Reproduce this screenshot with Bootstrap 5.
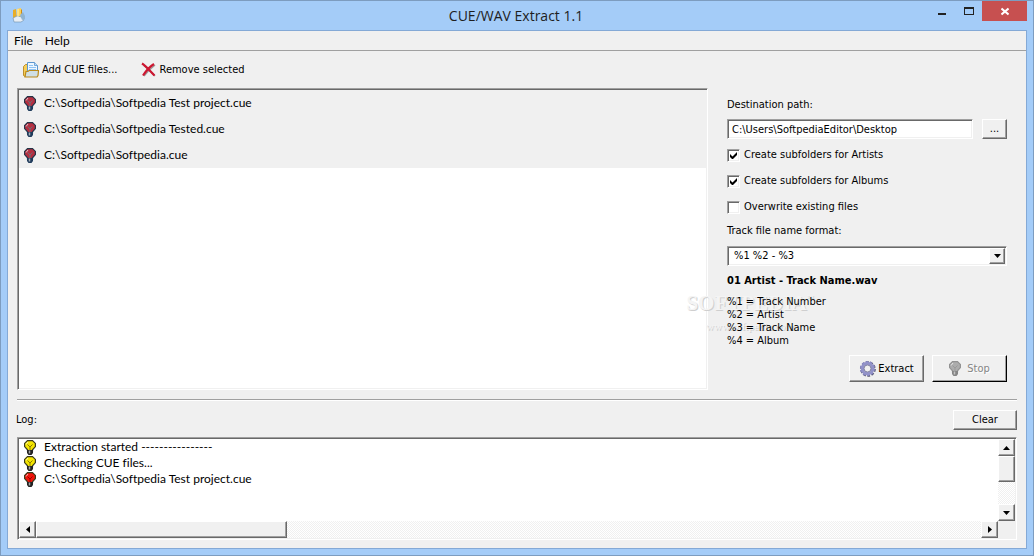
<!DOCTYPE html>
<html lang="en">
<head>
<meta charset="utf-8">
<meta name="viewport" content="width=device-width, initial-scale=1">
<title>CUE/WAV Extract 1.1</title>
<link href="https://cdn.jsdelivr.net/npm/bootstrap@5.3.0/dist/css/bootstrap.min.css" rel="stylesheet">
<style>
:root { --face: #f0f0f0; --mid: #a0a0a0; --dark: #696969; }
body { font: 11px/14px "DejaVu Sans Condensed", "DejaVu Sans", sans-serif; color: #000; }
.window { background: #a4ccf8; border: 1px solid #7d9cbf; padding: 0 6px 6px; }
.titlebar { height: 29px; padding: 0 6px 0 4px; font: 14px/29px "Open Sans", sans-serif; color: #1e1e1e; }
.title-side { flex: 1 1 0; height: 29px; }
.win-buttons { margin-right: -6px; }
.win-btn { border: 0; background: none; padding: 0; width: 27px; height: 20px; display: flex; justify-content: center; }
.win-close { width: 45px; background: #c75050; }
.client { background: var(--face); border: 1px solid #84a9d6; min-height: 0; }
.menubar { height: 20px; border-bottom: 1px solid var(--mid); padding-left: 6px; gap: 12px; font: 12px/19px Lato, sans-serif; }
.menubar a, .toolbar button { color: #000; text-decoration: none; }
.toolbar { height: 37px; padding-left: 15px; gap: 23px; }
.toolbar button { border: 0; background: none; padding: 0; gap: 3px; }
.workarea { padding: 0 19px 0 9px; gap: 19px; min-height: 0; }
.sunken { background: #fff; border: 1px solid; border-color: var(--mid) #fff #fff var(--mid); box-shadow: inset 1px 1px 0 var(--dark), inset -1px -1px 0 var(--face); padding: 1px; }
.raised { color: #000; background: var(--face); border: 1px solid; border-color: #fff var(--dark) var(--dark) #fff; border-radius: 0; box-shadow: inset -1px -1px 0 var(--mid); padding: 0; font-size: 11px; line-height: 14px; }
.entry { font: 12px/16px Lato, sans-serif; font-variant-ligatures: none; padding-left: 5px; gap: 8px; }
.file-list .entry { height: 26px; background: var(--face); }
.options { width: 280px; padding-top: 10px; }
.path-field { height: 20px; border-radius: 0; padding: 2px 4px; font-size: 11px; line-height: 14px; color: #000; min-width: 0; }
.browse { width: 25px; height: 20px; }
.path-row { margin: 7px 0 3px; gap: 9px; }
.check-row { height: 26px; gap: 4px; }
.check-row input { appearance: none; width: 13px; height: 13px; margin: 0; }
.check-row input:checked { background: #fff url("data:image/svg+xml,%3Csvg xmlns='http://www.w3.org/2000/svg' viewBox='0 0 13 13'%3E%3Cpath d='M3 5v3l2 2h1l4-4V3L5.5 7.500z'/%3E%3C/svg%3E") center / 13px 13px; }
.format-box { width: 100%; height: 20px; appearance: none; border-radius: 0; padding: 2px 20px 2px 6px; font-size: 11px; line-height: 14px; color: #000; }
.drop-arrow { right: 2px; top: 2px; width: 16px; height: 16px; pointer-events: none; }
.sample { margin: 8px 0 7px; }
.legend-lines { line-height: 13px; }
.action { width: 75px; height: 27px; gap: 2px; }
.action:disabled { color: #858585; border-right-color: #000; border-bottom-color: #000; text-shadow: 1px 1px 0 #fff; }
.watermark { left: 676px; top: 203px; width: 132px; text-align: center; font: bold 21px/24px "Liberation Serif", serif; color: #f4f4f4; text-shadow: 1px 1px 0 #cfcfcf; pointer-events: none; }
.watermark sup { font-size: 7px; top: -10px; }
.watermark span { display: block; font-size: 11px; line-height: 22px; font-weight: normal; }
.divider { height: 2px; margin: 9px 9px; border-top: 1px solid var(--mid); background: #fff; }
.log-head { padding: 0 9px 0 8px; margin-bottom: 7px; }
.clear { width: 64px; height: 20px; }
.log-box { margin: 0 9px 8px; height: 103px; display: grid; grid-template-columns: 1fr 17px; grid-template-rows: 1fr 17px; }
.track { background: repeating-conic-gradient(#fff 0 25%, #f0f0f0 0 50%) 0 0 / 2px 2px; }
.log-corner { background: var(--face); }
.arrow { width: 17px; height: 17px; }
.thumb-v { height: 26px; }
.thumb-h { width: 251px; }
</style>
</head>
<body>
<svg class="d-none">
  <symbol id="bulb" viewBox="0 0 12 15">
    <path d="M3.500 0.600h5l2.900 2.800v3.200L8.500 9.800v1h-5v-1L0.600 6.600V3.400z" fill="currentColor" stroke="var(--line,#3a3a1c)" stroke-width="1.200"/>
    <path d="M3.500 4.500L6 7l2.500-2.500M6 7v3" fill="none" stroke="var(--wire,#8a7a00)" stroke-width="1"/>
    <path d="M2 4.500L4 2" stroke="#fff" stroke-opacity=".7"/>
    <path d="M3 10h6v3l-1.500 2h-3L3 13z" fill="var(--cap,#222)"/>
    <path d="M5.500 10.500v3" stroke="#ddd" stroke-opacity=".7" stroke-width="1.500"/>
  </symbol>
</svg>
<div class="window vh-100 d-flex flex-column">
  <header class="titlebar d-flex">
    <div class="title-side">
      <svg class="d-block" width="16" height="29" viewBox="0 0 16 29"><path d="M2 9l3-1 1 11-4-1z" fill="#e9ad26"/><path d="M6 8l4-1v10H6z" fill="#ffd052"/><path d="M10 8l1 1v6h-1z" fill="#c98a18"/><path d="M2 17l4-2 5 1 2 3-3 2H3z" fill="#e8eef5" stroke="#7898b5" stroke-width=".7"/><path d="M9 14l3-3 2 4v3l-3 1z" fill="#8fb4d3"/><path d="M7 8v8" stroke="#fff3b0"/></svg>
    </div>
    <div>CUE/WAV Extract 1.1</div>
    <div class="title-side"><div class="win-buttons d-flex justify-content-end">
      <button class="win-btn" aria-label="Minimize"><svg width="10" height="20"><path d="M1 12h8v2H1z" fill="#222"/></svg></button>
      <button class="win-btn" aria-label="Maximize"><svg width="10" height="20"><path d="M0 6h10v8H0zM1 8v5h8V8z" fill="#222" fill-rule="evenodd"/></svg></button>
      <button class="win-btn win-close" aria-label="Close"><svg width="8" height="20"><path d="M0.500 7.500l7 6m0-6l-7 6" stroke="#fff" stroke-width="2"/></svg></button>
    </div></div>
  </header>
  <main class="client flex-grow-1 d-flex flex-column">
    <nav class="menubar d-flex"><a href="#">File</a><a href="#">Help</a></nav>
    <div class="toolbar d-flex align-items-center">
      <button class="d-flex align-items-center">
        <svg width="16" height="16" viewBox="0 0 16 16"><path d="M0.500 4.500l2-2H5v12H2l-1.500-1z" fill="#f6ce58" stroke="#b58620" stroke-width=".9"/><path d="M4.500 0.500h7l3 3V12h-10z" fill="#eef7ff" stroke="#5b96cf"/><path d="M11.500 0.500v3h3" fill="#b9dcfa" stroke="#5b96cf" stroke-width=".8"/><path d="M6 3.500h4M6 5.500h7M6 7.500h7" stroke="#8fc3f3"/><path d="M3 9.500h2l1-1h9.500l-.5 5-1 1.500H2z" fill="#cfdfe6" stroke="#b98a1c" stroke-width="1.200"/></svg>
        Add CUE files...</button>
      <button class="d-flex align-items-center">
        <svg width="16" height="16" viewBox="0 0 16 16"><path d="M3 3.500C7 6 10 10 14 14M14 3C9 7 6 10 3 14" stroke="#999" stroke-width="1.500" fill="none"/><path d="M1 1.500C5 4 9 9 13.500 13.500M13 2C8 5 5 9 2 13.500" stroke="#cc1731" stroke-width="2.200" fill="none"/></svg>
        Remove selected</button>
    </div>
    <div class="workarea position-relative d-flex flex-grow-1">
      <div class="sunken file-list flex-grow-1">
        <div class="entry d-flex align-items-center" style="--line:#243447;--wire:#6e6d76;--cap:#203c5c"><svg width="12" height="15" color="#b52f41"><use href="#bulb"/></svg>C:\Softpedia\Softpedia Test project.cue</div>
        <div class="entry d-flex align-items-center" style="--line:#243447;--wire:#6e6d76;--cap:#203c5c"><svg width="12" height="15" color="#b52f41"><use href="#bulb"/></svg>C:\Softpedia\Softpedia Tested.cue</div>
        <div class="entry d-flex align-items-center" style="--line:#243447;--wire:#6e6d76;--cap:#203c5c"><svg width="12" height="15" color="#b52f41"><use href="#bulb"/></svg>C:\Softpedia\Softpedia.cue</div>
      </div>
      <div class="watermark position-absolute">SOFTPEDIA<sup>™</sup><span>www.softpedia.com</span></div>
      <form class="options flex-shrink-0 position-relative">
        <label class="d-block" for="dest">Destination path:</label>
        <div class="path-row d-flex">
          <input id="dest" class="sunken path-field flex-grow-1" type="text" value="C:\Users\SoftpediaEditor\Desktop">
          <button type="button" class="raised browse">...</button>
        </div>
        <div class="check-row d-flex align-items-center"><input id="artists" class="sunken" type="checkbox" checked><label for="artists">Create subfolders for Artists</label></div>
        <div class="check-row d-flex align-items-center"><input id="albums" class="sunken" type="checkbox" checked><label for="albums">Create subfolders for Albums</label></div>
        <div class="check-row d-flex align-items-center"><input id="overwrite" class="sunken" type="checkbox"><label for="overwrite">Overwrite existing files</label></div>
        <label class="d-block mt-1 mb-2" for="format">Track file name format:</label>
        <div class="position-relative">
          <select id="format" class="sunken format-box d-block"><option>%1 %2 - %3</option></select>
          <span class="drop-arrow raised position-absolute d-flex align-items-center justify-content-center"><svg width="7" height="4"><path d="M0 0h7L3.500 4z"/></svg></span>
        </div>
        <div class="sample fw-bold">01 Artist - Track Name.wav</div>
        <div class="legend-lines">%1 = Track Number<br>%2 = Artist<br>%3 = Track Name<br>%4 = Album</div>
        <div class="d-flex justify-content-end gap-2 mt-2">
          <button type="button" class="raised action d-flex align-items-center justify-content-center">
            <svg width="17" height="17" viewBox="0 0 17 17"><circle cx="9" cy="9" r="6.800" fill="none" stroke="#56566e" stroke-width="2" stroke-dasharray="2.700 1.573"/><circle cx="8.500" cy="8.500" r="6.600" fill="none" stroke="#8585bd" stroke-width="2" stroke-dasharray="2.600 1.547"/><circle cx="8.500" cy="8.500" r="5.200" fill="none" stroke="#9292c9" stroke-width="3"/><circle cx="8.500" cy="8.500" r="3.500" fill="#f0f0f0" stroke="#65658c" stroke-width=".8"/></svg>
            Extract</button>
          <button type="button" disabled class="raised action d-flex align-items-center justify-content-center" style="--line:#929292;--wire:#999;--cap:#858585"><svg class="me-1" width="12" height="15" color="#acacac"><use href="#bulb"/></svg>Stop</button>
        </div>
      </form>
    </div>
    <div class="divider"></div>
    <div class="log-head d-flex justify-content-between align-items-center"><span>Log:</span><button class="raised clear">Clear</button></div>
    <div class="sunken log-box">
      <div class="overflow-hidden">
        <div class="entry d-flex align-items-center"><svg width="12" height="15" color="#f4e500"><use href="#bulb"/></svg>Extraction started ----------------</div>
        <div class="entry d-flex align-items-center"><svg width="12" height="15" color="#f4e500"><use href="#bulb"/></svg>Checking CUE files...</div>
        <div class="entry d-flex align-items-center" style="--wire:#a00000"><svg width="12" height="15" color="#f01408"><use href="#bulb"/></svg>C:\Softpedia\Softpedia Test project.cue</div>
      </div>
      <div class="track d-flex flex-column">
        <button class="raised arrow d-flex align-items-center justify-content-center" aria-label="Scroll up"><svg width="7" height="4"><path d="M0 4h7L3.500 0z"/></svg></button>
        <div class="raised thumb-v"></div>
        <button class="raised arrow mt-auto d-flex align-items-center justify-content-center" aria-label="Scroll down"><svg width="7" height="4"><path d="M0 0h7L3.500 4z"/></svg></button>
      </div>
      <div class="track d-flex">
        <button class="raised arrow d-flex align-items-center justify-content-center" aria-label="Scroll left"><svg width="4" height="7"><path d="M4 0v7L0 3.500z"/></svg></button>
        <div class="raised thumb-h"></div>
        <button class="raised arrow ms-auto d-flex align-items-center justify-content-center" aria-label="Scroll right"><svg width="4" height="7"><path d="M0 0v7l4-3.500z"/></svg></button>
      </div>
      <div class="log-corner"></div>
    </div>
  </main>
</div>
<script src="https://cdn.jsdelivr.net/npm/bootstrap@5.3.0/dist/js/bootstrap.bundle.min.js"></script>
</body>
</html>
